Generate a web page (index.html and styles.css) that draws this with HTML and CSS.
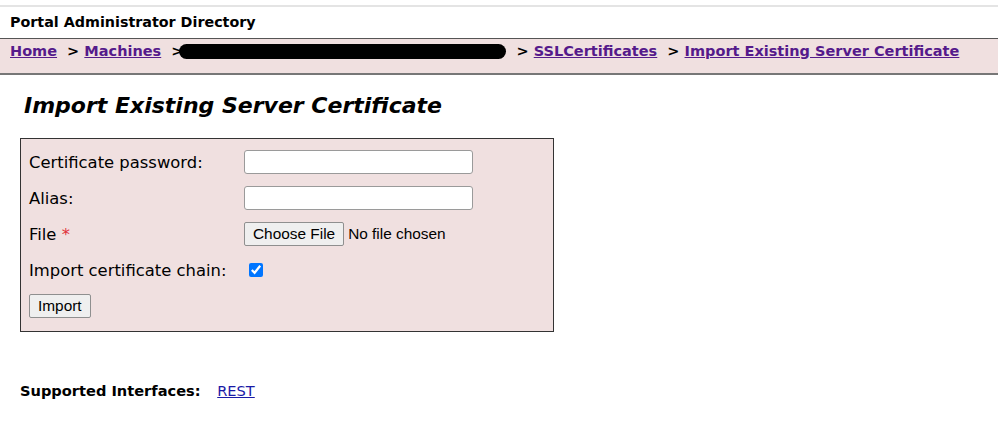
FILE: index.html
```html
<!DOCTYPE html>
<html lang="en">
<head>
    <meta charset="UTF-8">
    <title>Import Existing Server Certificate</title>
    <link rel="stylesheet" href="styles.css">
</head>
<body>
    <div class="top-rule"></div>
    <div class="banner">Portal Administrator Directory</div>
    <div class="breadcrumbs">
        <a href="#">Home</a>
        <span class="sep">&gt;</span> <a href="#">Machines</a>
        <span class="sep">&gt;</span><span class="redacted"></span>
        <span class="sep">&gt;</span> <a href="#">SSLCertificates</a>
        <span class="sep">&gt;</span> <a href="#">Import Existing Server Certificate</a>
    </div>

    <div class="content">
        <h2>Import Existing Server Certificate</h2>

        <form class="cert-form">
            <label for="password">Certificate password:</label>
            <input type="password" id="password" class="text-field">

            <label for="alias">Alias:</label>
            <input type="text" id="alias" class="text-field">

            <label for="file">File <span class="required">*</span></label>
            <input type="file" id="file" class="file-field">

            <label for="chain">Import certificate chain:</label>
            <div><input type="checkbox" id="chain" class="check" checked></div>

            <div class="actions"><button type="button">Import</button></div>
        </form>

        <div class="interfaces">
            <strong>Supported Interfaces:</strong>
            <a href="#">REST</a>
        </div>
    </div>
</body>
</html>
```

FILE: styles.css
```css
body {
    margin: 0;
    font-family: "DejaVu Sans", Verdana, sans-serif;
    background: white;
    color: #000;
}
.top-rule {
    margin-top: 5px;
    border-top: 2px solid #e4e4e4;
}
.banner {
    font-weight: bold;
    font-size: 14.3px;
    padding: 7px 10px 0;
    height: 24px;
}
.breadcrumbs {
    background: #f0e0e0;
    border-top: 1px solid #555;
    border-bottom: 2px solid #777;
    padding: 4px 10px 0;
    height: 30px;
    font-size: 14.5px;
    font-weight: bold;
    white-space: nowrap;
}
.breadcrumbs a {
    color: #551a8b;
}
.breadcrumbs .sep {
    margin-left: 5px;
}
.redacted {
    display: inline-block;
    width: 327px;
    height: 15px;
    background: #000;
    border-radius: 8px;
    vertical-align: -3px;
    margin-left: -4px;
}
.content {
    padding: 0 20px;
}
h2 {
    font-size: 22px;
    font-style: italic;
    font-weight: bold;
    margin: 18px 0 20px 4px;
}
.cert-form {
    width: 524px;
    background: #f0e0e0;
    border: 1px solid #333;
    padding: 11px 0 13px 8px;
    display: grid;
    grid-template-columns: 215px auto;
    row-gap: 12px;
    align-items: center;
    font-size: 16.4px;
}
.required {
    color: #e0303a;
}
.text-field {
    width: 229px;
    height: 24px;
    box-sizing: border-box;
    border: 1px solid #9a9a9a;
    border-radius: 3px;
    background: white;
    margin: 0;
}
.file-field {
    font: 15.4px "Liberation Sans", Arial, sans-serif;
    margin: 0;
}
.file-field::file-selector-button {
    font: 15.4px "Liberation Sans", Arial, sans-serif;
    height: 24px;
    padding: 0 8px;
    margin-right: 4px;
    border: 1px solid #8f8f8f;
    border-radius: 2px;
    background: #efefef;
}
.check {
    width: 14px;
    height: 14px;
    margin: 5px 0 5px 5px;
    display: block;
}
.actions {
    grid-column: 1 / 3;
}
.actions button {
    font: 15.4px "Liberation Sans", Arial, sans-serif;
    height: 24px;
    padding: 0 8px;
    border: 1px solid #8f8f8f;
    border-radius: 2px;
    background: #efefef;
}
.interfaces {
    margin-top: 50px;
    font-size: 14.6px;
}
.interfaces a {
    color: #1a1aa6;
    margin-left: 12px;
}
```
